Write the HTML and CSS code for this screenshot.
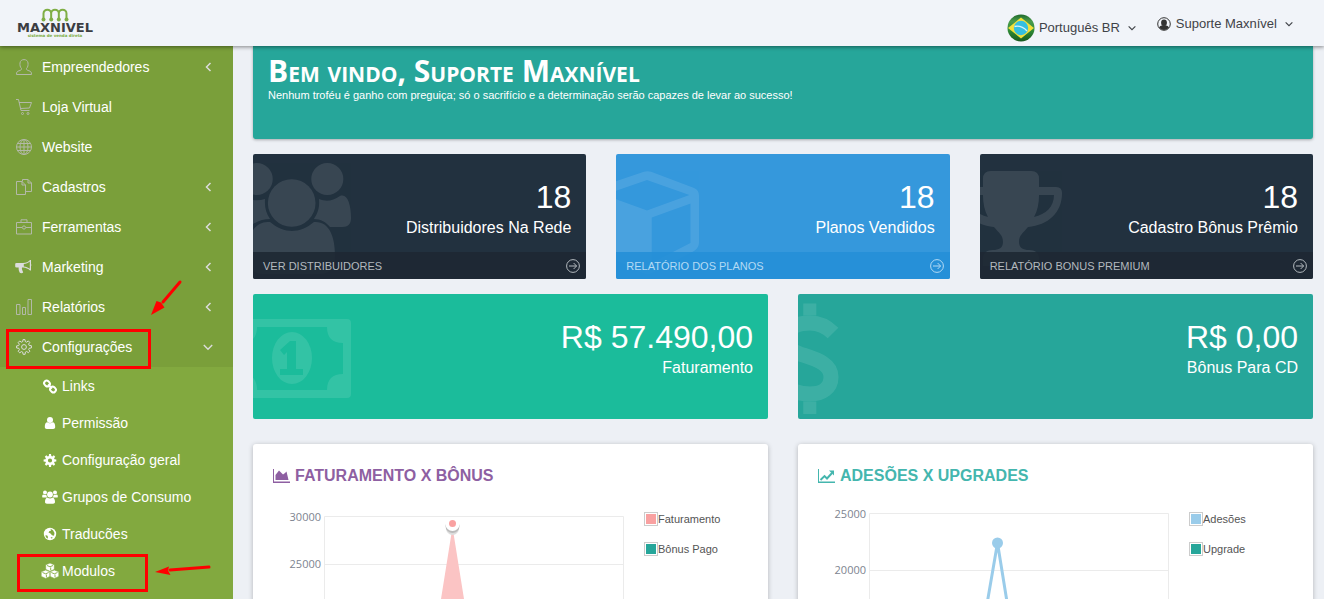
FILE: index.html
```html
<!DOCTYPE html>
<html lang="pt-BR">
<head>
<meta charset="utf-8">
<title>Maxnivel</title>
<link rel="stylesheet" href="styles.css">
</head>
<body>
<svg class="sprite" aria-hidden="true">
  <symbol id="left" viewBox="0 0 10 10"><path d="M7.500 1 3.500 5l4 4" fill="none" stroke="currentColor" stroke-width="1.5"/></symbol>
  <symbol id="down" viewBox="0 0 10 10"><path d="M.8 3 5 7.2 9.2 3" fill="none" stroke="currentColor" stroke-width="1.4"/></symbol>
  <symbol id="go" viewBox="0 0 14 14"><g fill="none" stroke="currentColor"><circle cx="7" cy="7" r="6.4"/><path d="M3 7h7.5M7.6 4l3 3-3 3"/></g></symbol>
</svg>

<header class="topbar">
  <a class="logo" href="#" aria-label="Maxnivel">
    <svg class="logo-mark" viewBox="0 0 28 14" aria-hidden="true"><g fill="none" stroke="#7fae45" stroke-width="2"><path d="M2.500 11V5.500a3.830 3.830 0 0 1 7.660 0V11M10.160 5.500a3.830 3.830 0 0 1 7.660 0V11M17.820 5.500a3.830 3.830 0 0 1 7.660 0V11"/></g><g fill="#7fae45"><circle cx="2.500" cy="11.500" r="2"/><circle cx="10.200" cy="11.500" r="2"/><circle cx="17.800" cy="11.500" r="2"/><circle cx="25.500" cy="11.500" r="2"/></g></svg>
    <span class="logo-name">MAXNIVEL</span>
    <span class="logo-tag">sistema de venda direta</span>
  </a>
  <div class="topmenu">
    <button class="lang" type="button">
      <svg class="flag" viewBox="0 0 28 28" aria-hidden="true">
        <defs><linearGradient id="fg" x1="0" y1="0" x2="0" y2="1"><stop offset="0" stop-color="#1f6a2b"/><stop offset=".25" stop-color="#4b9c4d"/><stop offset=".6" stop-color="#2f8a36"/><stop offset="1" stop-color="#17591f"/></linearGradient></defs>
        <circle cx="14" cy="14" r="13.500" fill="url(#fg)"/><path d="M14 3.500 27 14 14 24.500 1 14z" fill="#f3e03a"/><circle cx="14" cy="14" r="7.200" fill="#35bfe0"/><path d="M7.500 12.500q7-1.500 12.500 4.500" fill="none" stroke="#d8f4fb" stroke-width="1.300"/>
      </svg>
      <span>Português BR</span>
      <svg class="caret"><use href="#down"/></svg>
    </button>
    <button class="account" type="button">
      <svg class="avatar" viewBox="0 0 14 14" aria-hidden="true"><circle cx="7" cy="7" r="6.300" fill="none" stroke="#333" stroke-width="1"/><ellipse cx="7" cy="5.700" rx="2.900" ry="3.200" fill="#333"/><path d="M2 10.500Q2.700 8.800 5.500 8.300h3q2.800.5 3.500 2.200Q9.800 13 7 13t-5-2.500z" fill="#333"/></svg>
      <span>Suporte Maxnível</span>
      <svg class="caret"><use href="#down"/></svg>
    </button>
  </div>
</header>

<div class="shell">
  <nav class="sidebar">
    <ul class="menu">
      <li><a href="#"><svg class="ico" viewBox="0 0 16 16"><path d="M5.500 9.500C4 8 3.800 6 4 4 4.200 1.800 5.800.600 8 .600S11.800 1.800 12 4c.2 2 0 4-1.500 5.500 0 1.500.500 1.700 2.500 2.300 1.800.5 2.500 1.200 2.500 3.700H.500c0-2.500.7-3.200 2.500-3.700 2-.6 2.500-.8 2.500-2.300z"/></svg><span>Empreendedores</span><svg class="caret"><use href="#left"/></svg></a></li>
      <li><a href="#"><svg class="ico" viewBox="0 0 16 16"><path d="M0 .500h2.500L5 11.500h8.500M3 3.500h12.500l-2 5.500-9 .500"/><circle cx="6.500" cy="14.500" r="1"/><circle cx="12" cy="14.500" r="1"/></svg><span>Loja Virtual</span></a></li>
      <li><a href="#"><svg class="ico" viewBox="0 0 16 16"><circle cx="8" cy="8" r="7.500"/><ellipse cx="8" cy="8" rx="4" ry="7.500"/><path d="M8 .500v15M.500 8h15M1.500 4.500h13M1.500 11.500h13"/></svg><span>Website</span></a></li>
      <li><a href="#"><svg class="ico" viewBox="0 0 16 16"><path d="M.500 2.500h5.500l3.500 3.500v9.500h-9zM6 2.500v3.500h3.500M6.500 2.500V.500H12l3.500 3.500v8.500H10M12 .500V4h3.500"/></svg><span>Cadastros</span><svg class="caret"><use href="#left"/></svg></a></li>
      <li><a href="#"><svg class="ico" viewBox="0 0 16 16"><path d="M.500 3.500h15v11.500H.500zM5 3.500V.800h6v2.700M.500 8.500h5.500M10 8.500h5.500"/><circle cx="8" cy="8.500" r="1.600"/></svg><span>Ferramentas</span><svg class="caret"><use href="#left"/></svg></a></li>
      <li><a href="#"><svg class="ico horn" viewBox="0 0 16 16"><path fill="#dcdcdc" stroke="none" d="M.500 4h6.500C10 4 12.500 2.500 14 .900h1v4.300q1 .8 0 1.800v4.500h-1C12.300 10 10 8.800 7 8.600H6c-.6 1.800.8 3 1.200 5-1 .8-2.800.8-3.600 0-.6-1.600-1.200-3-.9-5H.500Q-.8 8.600-.8 7.500V5Q-.8 4 .500 4z"/><path fill="#7a9f3a" stroke="none" d="M7.800 5c2.300-.1 4.300-1 6-2.400v7.200C12 8.500 10 7.700 7.800 7.500z"/></svg><span>Marketing</span><svg class="caret"><use href="#left"/></svg></a></li>
      <li><a href="#"><svg class="ico" viewBox="0 0 16 16"><path d="M.500 5.500h3.500v10H.500zM6.500 8.500h3v7h-3zM12 .500h3.500v15H12z"/></svg><span>Relatórios</span><svg class="caret"><use href="#left"/></svg></a></li>
      <li class="open">
        <a href="#"><svg class="ico gear" viewBox="0 0 16 16"><path d="M6.700 2.600 7 .600h2l.3 2 1.300.6 1.700-1.300 1.500 1.500-1.200 1.700.6 1.300 2.200.3v2.200l-2.200.4-.5 1.200 1.200 1.700-1.500 1.500-1.700-1.200-1.300.6-.3 2.200h-2l-.4-2.200-1.300-.5-1.700 1.200-1.500-1.500 1.200-1.800-.5-1.200L.600 9V6.900l2.100-.3.600-1.400L2.200 3.500 3.700 2l1.700 1.200z"/><circle cx="8" cy="8" r="2.400"/></svg><span>Configurações</span><svg class="caret"><use href="#down"/></svg></a>
        <i class="mark mark-parent"></i>
        <svg class="arrow arrow-parent" viewBox="0 0 34 38" aria-hidden="true"><path d="M31 3 14 23" stroke="#f00" stroke-width="3" stroke-linecap="round"/><path d="M2 36 7.500 22 12 23.500 15.500 28.500z" fill="#f00"/></svg>
        <ul class="submenu">
          <li><a href="#"><svg class="sub" viewBox="0 0 18 16"><g fill="none" stroke="#fff" stroke-width="2"><rect x="3" y="3" width="6" height="5" rx="2.400" transform="rotate(45 6 5.500)"/><rect x="9" y="9" width="6" height="5" rx="2.400" transform="rotate(45 12 11.500)"/><path d="m7 6.500 4 4"/></g></svg><span>Links</span></a></li>
          <li><a href="#"><svg class="sub" viewBox="0 0 18 16"><circle cx="9" cy="5" r="3"/><path d="M3.800 12c0-2.800.8-4.800 2.600-4.800 1.500 1.300 3.700 1.300 5.200 0 1.800 0 2.600 2 2.600 4.800 0 1.300-.8 2-2 2H5.800c-1.200 0-2-.7-2-2z"/></svg><span>Permissão</span></a></li>
          <li><a href="#"><svg class="sub" viewBox="0 0 18 16"><path fill-rule="evenodd" d="m7.800 4 .2-2h2l.3 2 1 .4 1.500-1.100 1.400 1.400-1.100 1.500.4 1 1.800.3v2l-1.800.3-.4 1 1.100 1.500-1.400 1.400-1.500-1.100-1 .4-.3 1.900H8L7.800 13l-1-.4-1.500 1.100-1.500-1.400 1.100-1.500-.4-1L2.600 9.500v-2l1.900-.3.4-1-1.100-1.500 1.500-1.400 1.500 1.100zM9 6.400a2.100 2.100 0 1 0 0 4.200 2.100 2.100 0 0 0 0-4.200z"/></svg><span>Configuração geral</span></a></li>
          <li><a href="#"><svg class="sub" viewBox="0 0 18 16"><circle cx="4" cy="3.500" r="2"/><circle cx="14" cy="3.500" r="2"/><circle cx="9" cy="5.500" r="2.900"/><path d="M1.200 8V7q0-1.600 1-1.600Q4 6.600 5.400 5.800q0 1.800 1 2.800H2.500Q1.200 8.600 1.200 8zM16.800 8V7q0-1.600-1-1.600-1.800 1.200-3.200.4 0 1.800-1 2.800h3.900q1.300 0 1.300-.6zM4 13c0-2.500.8-4.300 2.500-4.300q2.500 1.500 5 0c1.700 0 2.500 1.800 2.500 4.300 0 1-.8 1.700-1.900 1.700H5.900C4.800 14.700 4 14 4 13z"/></svg><span>Grupos de Consumo</span></a></li>
          <li><a href="#"><svg class="sub" viewBox="0 0 18 16"><circle cx="9" cy="8" r="6.200"/><path fill="#82a93f" d="M9.500 2.800 12 4.200 13.500 7 13 9.800 11 9.200 9.500 7.500 7.500 6.500 8.500 5 10 4.800zM4.500 9l2 .8.500 1.500-.5 1.500L4.800 11zM9.500 11.500l2-.500-.5 1.800z"/></svg><span>Traducões</span></a></li>
          <li><a href="#"><svg class="sub" viewBox="0 0 18 16"><g fill="#fff" stroke="#82a93f" stroke-width=".6"><path d="m9 0 4.300 1.800v4.600L9 8.400 4.700 6.400V1.800z"/><path d="m4.700 7 4.300 1.800v4.600l-4.300 2-4.500-2V8.800zM13.300 7l4.500 1.800v4.600l-4.500 2-4.300-2V8.800z"/></g><path d="M6 2.500 9 3.800l3-1.300M1.500 9.500l3.200 1.300 3-1.300M10.300 9.500l3 1.300 3.200-1.300M9.700 4.500v2.800M5.400 11.500v2.800M14 11.500v2.800" fill="none" stroke="#82a93f" stroke-width=".9"/></svg><span>Modulos</span></a>
            <i class="mark mark-child"></i>
            <svg class="arrow arrow-child" viewBox="0 0 58 12" aria-hidden="true"><path d="M55 3 16 6" stroke="#f00" stroke-width="3" stroke-linecap="round"/><path d="M1 8 15 2.500 14 6.500 16.500 11z" fill="#f00"/></svg>
          </li>
        </ul>
      </li>
    </ul>
  </nav>

  <main class="content">
    <section class="welcome">
      <h1>Bem vindo, Suporte Maxnível</h1>
      <p>Nenhum troféu é ganho com preguiça; só o sacrifício e a determinação serão capazes de levar ao sucesso!</p>
    </section>

    <section class="tiles three">
      <article class="tile dark">
        <svg class="pic" viewBox="0 0 110 125" aria-hidden="true"><circle cx="3.700" cy="25" r="16"/><circle cx="74.300" cy="25" r="16"/><circle cx="38.700" cy="49" r="23.800"/><path d="M66 45c7 3 14 2 21-3 7-3 11 8 11 22 0 6-3 9-9 9H77c-4-5-9-8-16-8 3-5 6-10 5-20zM0 46q6 1 12-1-1 12 5 20-9 0-17 5zM-2 80c3-7 9-13 19-12 14 12 30 12 44 0 15-1 21 14 21 34 0 12-6 18-16 18H10q-7 0-12-5z"/></svg>
        <div class="figures"><strong>18</strong><span>Distribuidores Na Rede</span></div>
        <a class="more" href="#"><span>Ver distribuidores</span><svg><use href="#go"/></svg></a>
      </article>
      <article class="tile blue">
        <svg class="pic" viewBox="0 0 110 125" aria-hidden="true"><path fill-rule="evenodd" d="M-5 29 28 17.800q3.300-1.300 7 0L78 34q5 2 5 8v46q0 6-5 9l-42 22q-4.500 2-9 0L-5 104zM31 26 73.500 41 31 56.500-12 41zM74.500 49.500V89L35.700 109V63.500z"/></svg>
        <div class="figures"><strong>18</strong><span>Planos Vendidos</span></div>
        <a class="more" href="#"><span>Relatório dos planos</span><svg><use href="#go"/></svg></a>
      </article>
      <article class="tile dark">
        <svg class="pic" viewBox="0 0 110 125" aria-hidden="true"><path fill-rule="evenodd" d="M11 17h40q8 0 8 8v8h17q6 0 6 6c0 20-14 32-34 34-5 6-9 8-9 15 0 6 4 8 10 8 7 0 10 4 10 8v8H3v-8c0-4 3-8 10-8 6 0 10-2 10-8 0-7-4-9-9-15-20-2-34-14-34-34q0-6 6-6H3v-8q0-8 8-8zm48 24q0 13-5 22c12-3 20-10 20-22zM3 41h-15c0 12 8 19 20 22q-5-9-5-22z"/></svg>
        <div class="figures"><strong>18</strong><span>Cadastro Bônus Prêmio</span></div>
        <a class="more" href="#"><span>Relatório bonus premium</span><svg><use href="#go"/></svg></a>
      </article>
    </section>

    <section class="tiles two">
      <article class="tile green">
        <svg class="pic" viewBox="0 0 110 125" aria-hidden="true"><path fill-rule="evenodd" d="M-10 25H94q4 0 4 4v71q0 4-4 4H-10zM4 33q0 11-8 15v32q8 5 8 16h70q0-16 16-16V49Q74 49 74 33zM39 38a20 26 0 0 1 0 52 20 26 0 0 1 0-52zm-2 9-10 9 4 5 3-3v17h-7v6h23v-6h-7V47z"/></svg>
        <div class="figures"><strong>R$ 57.490,00</strong><span>Faturamento</span></div>
      </article>
      <article class="tile teal">
        <svg class="pic" viewBox="0 0 110 125" aria-hidden="true"><g fill="none" stroke="#fff" stroke-width="15"><path d="M35 39C29 33 21 29 12 29-4 29-12 36-12 44c0 9 6 13 14 16 15 5 31 9 31 23 0 11-9 17-21 17-9 0-17-2-24-8"/><path stroke-width="13" d="M11.800 9.500v12M11.800 107.500V120"/></g></svg>
        <div class="figures"><strong>R$ 0,00</strong><span>Bônus Para CD</span></div>
      </article>
    </section>

    <section class="tiles two panels">
      <article class="panel">
        <h2 class="purple"><svg viewBox="0 0 17 14" aria-hidden="true"><path fill="#8e5fa2" d="M0 0h1v12.500h16V14H0zM2.500 11V6L6 1.500l4 4L12 4l1.500-1.500 2 8.500z"/></svg>Faturamento x Bônus</h2>
        <div class="chart">
          <svg class="plot" viewBox="0 0 352 180" aria-label="Faturamento x Bônus">
            <path class="grid" d="M51.500 180V11.500h299V180M51.500 59.500h299M51.500 106.500h299"/>
            <path d="M179.500 22 168 94l-14 86h51l-14-86z" fill="#fbc4c4"/>
            <circle cx="179.500" cy="23.500" r="6.500" fill="#ddd"/><circle cx="179.500" cy="21" r="7" fill="#bbb"/><circle cx="179.500" cy="19" r="7" fill="#fff"/><circle cx="179.500" cy="18.500" r="3.500" fill="#f9a1a1"/>
            <text x="48" y="16">30000</text><text x="48" y="63">25000</text>
          </svg>
          <ul class="legend"><li><i class="pink"></i>Faturamento</li><li><i class="sea"></i>Bônus Pago</li></ul>
        </div>
      </article>
      <article class="panel">
        <h2 class="aqua"><svg viewBox="0 0 17 14" aria-hidden="true"><path fill="#44b6ae" d="M0 0h1v12.500h16V14H0z"/><path fill="none" stroke="#44b6ae" stroke-width="1.900" d="m2.500 11 4-4 2.500 2.500 5-5.500"/><path fill="#44b6ae" d="M11 1.500h5v5z"/></svg>Adesões x Upgrades</h2>
        <div class="chart">
          <svg class="plot" viewBox="0 0 352 180" aria-label="Adesões x Upgrades">
            <path class="grid" d="M51.500 180V8.500h299V180M51.500 65.500h299M51.500 122.500h299"/>
            <path d="M163 134 179.500 38 195 134" fill="none" stroke="#9accea" stroke-width="3"/>
            <circle cx="179.500" cy="38" r="5.500" fill="#9accea"/>
            <text x="48" y="13">25000</text><text x="48" y="69">20000</text>
          </svg>
          <ul class="legend"><li><i class="sky"></i>Adesões</li><li><i class="sea"></i>Upgrade</li></ul>
        </div>
      </article>
    </section>
  </main>
</div>
</body>
</html>
```

FILE: styles.css
```css
* { box-sizing: border-box; }

body {
  margin: 0;
  height: 100vh;
  display: flex;
  flex-direction: column;
  overflow: hidden;
  background: #edf0f5;
  color: #333;
  font: 14px/20px "Liberation Sans", Arial, sans-serif;
}

ul { list-style: none; margin: 0; padding: 0; }
a { color: inherit; text-decoration: none; }
button { border: 0; background: none; padding: 0; color: inherit; font: inherit; }
.sprite { position: absolute; width: 0; height: 0; }
.caret { width: 10px; height: 10px; flex: none; }

/* Top bar */
.topbar {
  position: relative;
  z-index: 2;
  flex: none;
  height: 46px;
  display: flex;
  justify-content: space-between;
  padding: 0 30px 0 17px;
  background: #f1f4f9;
  box-shadow: 0 1px 4px rgba(0, 0, 0, .45);
}
.logo { display: flex; flex-direction: column; align-items: center; padding-top: 8px; }
.logo-mark { width: 28px; height: 14px; }
.logo-name { font: bold 13px/11px "DejaVu Sans", sans-serif; color: #3b3d42; }
.logo-tag { font: bold 4px/5px "DejaVu Sans", sans-serif; color: #7fae45; }
.topmenu { display: flex; align-items: flex-start; gap: 20px; font-size: 13px; color: #3f4247; }
.lang, .account { display: flex; align-items: center; }
.lang { padding-top: 14px; }
.flag { width: 28px; height: 28px; margin-right: 4px; }
.topmenu .caret { width: 8px; height: 8px; margin: 0 1px 0 8px; }
.account { padding-top: 14px; }
.avatar { width: 14px; height: 14px; margin-right: 5px; }

.shell { flex: 1; min-height: 0; display: flex; overflow: hidden; }

/* Sidebar */
.sidebar { width: 233px; flex: none; padding-top: 1px; background: #7a9f3a; color: #fff; }
.menu > li > a {
  display: flex;
  align-items: center;
  gap: 10px;
  height: 40px;
  padding: 0 20px 0 16px;
}
.menu .caret { margin-left: auto; color: #dcdcdc; }
.ico { width: 16px; height: 16px; overflow: visible; fill: none; stroke: #b3b9a8; }
.ico.gear { stroke: #dcdcdc; }
.open, .submenu li { position: relative; }
.submenu { background: #82a93f; padding-bottom: 20px; }
.submenu a { display: flex; align-items: center; gap: 3px; height: 37px; padding-left: 41px; }
.sub { width: 18px; height: 16px; fill: #fff; }

/* Red call-outs over the menu */
.mark { position: absolute; border: 3px solid #f00; }
.mark-parent { left: 6px; top: 2px; width: 145px; height: 40px; }
.mark-child { left: 17px; top: 2px; width: 131px; height: 38px; }
.arrow { position: absolute; fill: none; }
.arrow-parent { left: 149px; top: -48px; width: 34px; height: 38px; }
.arrow-child { left: 154px; top: 12px; width: 58px; height: 12px; }

/* Content */
.content { flex: 1; min-width: 0; padding: 0 11px 0 20px; }
.welcome {
  height: 93px;
  padding: 8px 15px;
  background: #26a69a;
  border-radius: 0 0 3px 3px;
  box-shadow: 0 1px 3px rgba(0, 0, 0, .3);
  color: #fff;
}
.welcome h1 { margin: 0; font: small-caps 700 30px/34px "Open Sans", sans-serif; }
.welcome p { margin: 0; font-size: 11px; line-height: 14px; }

.tiles { display: grid; gap: 30px; margin-top: 15px; }
.three { grid-template-columns: repeat(3, 1fr); }
.two { grid-template-columns: repeat(2, 1fr); }
.tile {
  position: relative;
  display: flex;
  flex-direction: column;
  justify-content: space-between;
  min-height: 125px;
  overflow: hidden;
  border-radius: 2px;
  color: #fff;
}
.dark { background: #22313f; }
.blue { background: #3598dc; }
.green { background: #1bbc9b; }
.teal { background: #26a69a; }
.pic { position: absolute; left: 0; top: 0; width: 110px; height: 125px; fill: #fff; opacity: .1; }
.figures { display: flex; flex-direction: column; align-items: flex-end; padding: 25px 15px 0; }
.figures strong { font-size: 32px; line-height: 36px; font-weight: 400; }
.figures span { font-size: 16px; line-height: 26px; }
.more {
  position: relative;
  display: flex;
  align-items: center;
  justify-content: space-between;
  height: 27px;
  padding: 0 6px 0 10px;
  background: #1e2833e6;
  color: #b3b9be;
  font-size: 11px;
  text-transform: uppercase;
}
.more svg { width: 14px; height: 14px; }
.blue .more { background: #258fd7e6; color: #b3daf4; }

.panels { margin-top: 25px; }
.panel {
  padding: 20px 20px 0;
  background: #fff;
  border-radius: 3px;
  box-shadow: 0 1px 5px rgba(0, 0, 0, .25);
}
.panel h2 {
  display: flex;
  align-items: center;
  gap: 5px;
  margin: 0;
  font-size: 16px;
  line-height: 24px;
  text-transform: uppercase;
}
.panel h2 svg { width: 17px; height: 14px; }
.purple { color: #8e5fa2; }
.aqua { color: #44b6ae; }
.chart { display: flex; align-items: flex-start; gap: 19px; padding-top: 17px; }
.plot { width: 352px; height: 180px; flex: none; }
.plot .grid { fill: none; stroke: #ebebeb; }
.plot text { font: 11px "Open Sans", sans-serif; fill: #7d8490; text-anchor: end; }
.legend { padding-top: 4px; font-size: 11px; color: #545454; }
.legend li { display: flex; align-items: center; margin-bottom: 10px; }
.legend i { width: 14px; height: 14px; padding: 1px; border: 1px solid #ccc; background-clip: content-box; }
.pink { background-color: #f9a1a1; }
.sky { background-color: #9accea; }
.sea { background-color: #26a69a; }
```
